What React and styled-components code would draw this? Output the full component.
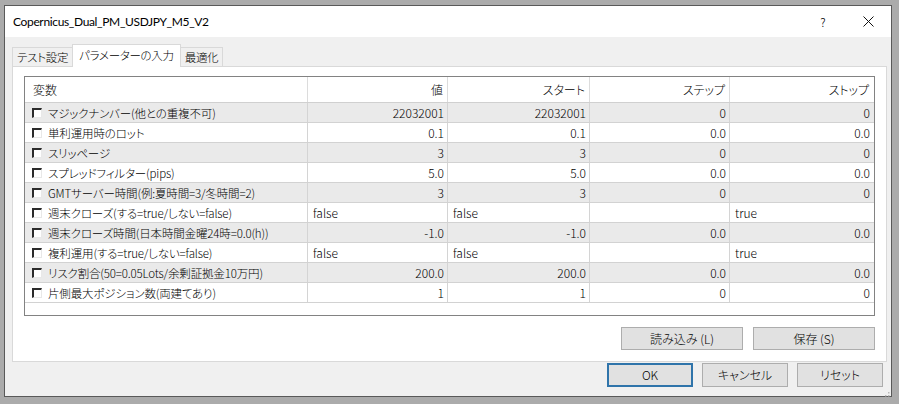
import styled, { createGlobalStyle } from "styled-components";

const GlobalStyle = createGlobalStyle`
  html, body {
    margin: 0;
    padding: 0;
    background: #ababab;
  }
  body {
    font-family: "Noto Sans CJK JP", "Noto Sans", sans-serif;
    font-size: 12px;
    font-weight: 300;
    font-feature-settings: "palt" 1;
    color: #000;
  }
`;

const columns = ["変数", "値", "スタート", "ステップ", "ストップ"];

const rows = [
  ["マジックナンバー(他との重複不可)", "22032001", "22032001", "0", "0"],
  ["単利運用時のロット", "0.1", "0.1", "0.0", "0.0"],
  ["スリッページ", "3", "3", "0", "0"],
  ["スプレッドフィルター(pips)", "5.0", "5.0", "0.0", "0.0"],
  ["GMTサーバー時間(例:夏時間=3/冬時間=2)", "3", "3", "0", "0"],
  ["週末クローズ(する=true/しない=false)", "false", "false", "", "true", true],
  ["週末クローズ時間(日本時間金曜24時=0.0(h))", "-1.0", "-1.0", "0.0", "0.0"],
  ["複利運用(する=true/しない=false)", "false", "false", "", "true", true],
  ["リスク割合(50=0.05Lots/余剰証拠金10万円)", "200.0", "200.0", "0.0", "0.0"],
  ["片側最大ポジション数(両建てあり)", "1", "1", "0", "0"],
];

function App() {
  return (
    <>
      <GlobalStyle />
      <Window>
        <TitleBar>
          <Title>Copernicus_Dual_PM_USDJPY_M5_V2</Title>
          <HelpButton>?</HelpButton>
          <CloseButton>
            <svg width="11" height="11" viewBox="0 0 11 11">
              <path d="M0.5 0.5 L10.5 10.5 M10.5 0.5 L0.5 10.5" stroke="#111" strokeWidth="1" />
            </svg>
          </CloseButton>
        </TitleBar>
        <Body>
          <TabStrip>
            <Tab>テスト設定</Tab>
            <Tab $active>パラメーターの入力</Tab>
            <Tab>最適化</Tab>
          </TabStrip>
          <Panel>
            <Grid>
              <HeaderRow>
                {columns.map((c, i) => (
                  <HeaderCell key={c} $right={i > 0}>
                    {c}
                  </HeaderCell>
                ))}
              </HeaderRow>
              {rows.map((r, i) => (
                <Row key={r[0]} $shaded={i % 2 === 0}>
                  <NameCell>
                    <CheckBox />
                    <Label>{r[0]}</Label>
                  </NameCell>
                  {r.slice(1, 5).map((v, j) => (
                    <Cell key={j} $left={r[5]}>
                      {v}
                    </Cell>
                  ))}
                </Row>
              ))}
            </Grid>
            <PanelButtons>
              <Button $w={122}>読み込み (L)</Button>
              <Button $w={122}>保存 (S)</Button>
            </PanelButtons>
          </Panel>
          <Footer>
            <Button $w={86} $h={24} $default>OK</Button>
            <Button $w={86} $h={24}>キャンセル</Button>
            <Button $w={86} $h={24}>リセット</Button>
          </Footer>
        </Body>
        <Grip>
          <svg width="9" height="9" viewBox="0 0 9 9">
            {[
              [7, 1],
              [4, 4],
              [7, 4],
              [1, 7],
              [4, 7],
              [7, 7],
            ].map(([x, y]) => (
              <rect key={`${x}-${y}`} x={x} y={y} width="1.5" height="1.5" fill="#b8b8b8" />
            ))}
          </svg>
        </Grip>
      </Window>
    </>
  );
}

export default App;

const Window = styled.div`
  position: relative;
  margin: 5px 0 0 4px;
  width: 888px;
  height: 392px;
  box-sizing: border-box;
  border: 1px solid #595959;
  background: #f0f0f0;
  display: flex;
  flex-direction: column;
`;

const TitleBar = styled.div`
  height: 31px;
  background: #fff;
  display: flex;
  align-items: center;
  padding-left: 8px;
`;

const Title = styled.div`
  flex: 1;
  font-family: "Lato", "Noto Sans", sans-serif;
  font-size: 12px;
  font-weight: 400;
  letter-spacing: -0.35px;
  padding-bottom: 1px;
`;

const HelpButton = styled.div`
  width: 12px;
  font-size: 12px;
  margin-right: 34px;
  text-align: center;
`;

const CloseButton = styled.div`
  width: 11px;
  height: 11px;
  margin-right: 17px;
  display: flex;
`;

const Body = styled.div`
  flex: 1;
  display: flex;
  flex-direction: column;
  padding: 7px 4px 0 7px;
`;

const TabStrip = styled.div`
  display: flex;
  align-items: flex-end;
  height: 23px;
  margin-bottom: -1px;
  position: relative;
  z-index: 1;
`;

const Tab = styled.div`
  box-sizing: border-box;
  height: ${(p) => (p.$active ? "23px" : "20px")};
  padding: 0 ${(p) => (p.$active ? "6px" : "4px")};
  margin: ${(p) => (p.$active ? "0 -1px" : "0")};
  position: relative;
  z-index: ${(p) => (p.$active ? 2 : 1)};
  display: flex;
  align-items: center;
  justify-content: center;
  font-size: 11.5px;
  letter-spacing: -0.3px;
  background: ${(p) => (p.$active ? "#fff" : "#f0f0f0")};
  border: 1px solid #d9d9d9;
  border-bottom: ${(p) => (p.$active ? "none" : "1px solid #d9d9d9")};
  padding-bottom: ${(p) => (p.$active ? "3px" : "0")};
  white-space: nowrap;
`;

const Panel = styled.div`
  box-sizing: border-box;
  height: 296px;
  background: #fff;
  border: 1px solid #d9d9d9;
  padding: 9px 11px 11px 11px;
  display: flex;
  flex-direction: column;
`;

const Grid = styled.div`
  box-sizing: border-box;
  height: 240px;
  border: 1px solid #828282;
  display: flex;
  flex-direction: column;
`;

const HeaderRow = styled.div`
  display: grid;
  grid-template-columns: 283px 140px 142px 140px 1fr;
  height: 26px;
  box-sizing: border-box;
  border-bottom: 1px solid #d0d0d0;
`;

const HeaderCell = styled.div`
  display: flex;
  align-items: center;
  justify-content: ${(p) => (p.$right ? "flex-end" : "flex-start")};
  padding: ${(p) => (p.$right ? "0 4px 0 0" : "0 0 0 8px")};
  border-right: 1px solid #dcdcdc;
  &:last-child {
    border-right: none;
    padding-right: 5px;
  }
`;

const Row = styled.div`
  display: grid;
  grid-template-columns: 283px 140px 142px 140px 1fr;
  height: 20px;
  box-sizing: border-box;
  border-bottom: 1px solid #d2d2d2;
  background: ${(p) => (p.$shaded ? "#eaeaea" : "#fff")};
`;

const NameCell = styled.div`
  display: flex;
  align-items: center;
  gap: 6px;
  padding-left: 7px;
  border-right: 1px solid #d4d4d4;
  white-space: nowrap;
  overflow: hidden;
`;

const Label = styled.span`
  font-size: 11.5px;
  letter-spacing: -0.15px;
`;

const CheckBox = styled.span`
  width: 10px;
  height: 10px;
  box-sizing: border-box;
  background: #fff;
  border-top: 2px solid #2b2b2b;
  border-left: 2px solid #2b2b2b;
  border-right: 1px solid #e8e8e8;
  border-bottom: 1px solid #e8e8e8;
  flex-shrink: 0;
`;

const Cell = styled.div`
  display: flex;
  align-items: center;
  justify-content: ${(p) => (p.$left ? "flex-start" : "flex-end")};
  padding: ${(p) => (p.$left ? "0 0 0 5px" : "0 3px 0 0")};
  border-right: 1px solid #d4d4d4;
  &:last-child {
    border-right: none;
    padding-right: ${(p) => (p.$left ? "0" : "4px")};
  }
`;

const PanelButtons = styled.div`
  display: flex;
  justify-content: flex-end;
  gap: 10px;
  margin-top: 11px;
`;

const Button = styled.div`
  box-sizing: border-box;
  width: ${(p) => p.$w}px;
  height: ${(p) => p.$h || 23}px;
  display: flex;
  align-items: center;
  justify-content: center;
  background: #e1e1e1;
  border: ${(p) => (p.$default ? "2px solid #2f74aa" : "1px solid #adadad")};
  padding-bottom: 1px;
`;

const Footer = styled.div`
  display: flex;
  justify-content: flex-end;
  gap: 9px;
  margin: 1px 4px 0 0;
`;

const Grip = styled.div`
  position: absolute;
  right: 1px;
  bottom: 1px;
  width: 9px;
  height: 9px;
`;
